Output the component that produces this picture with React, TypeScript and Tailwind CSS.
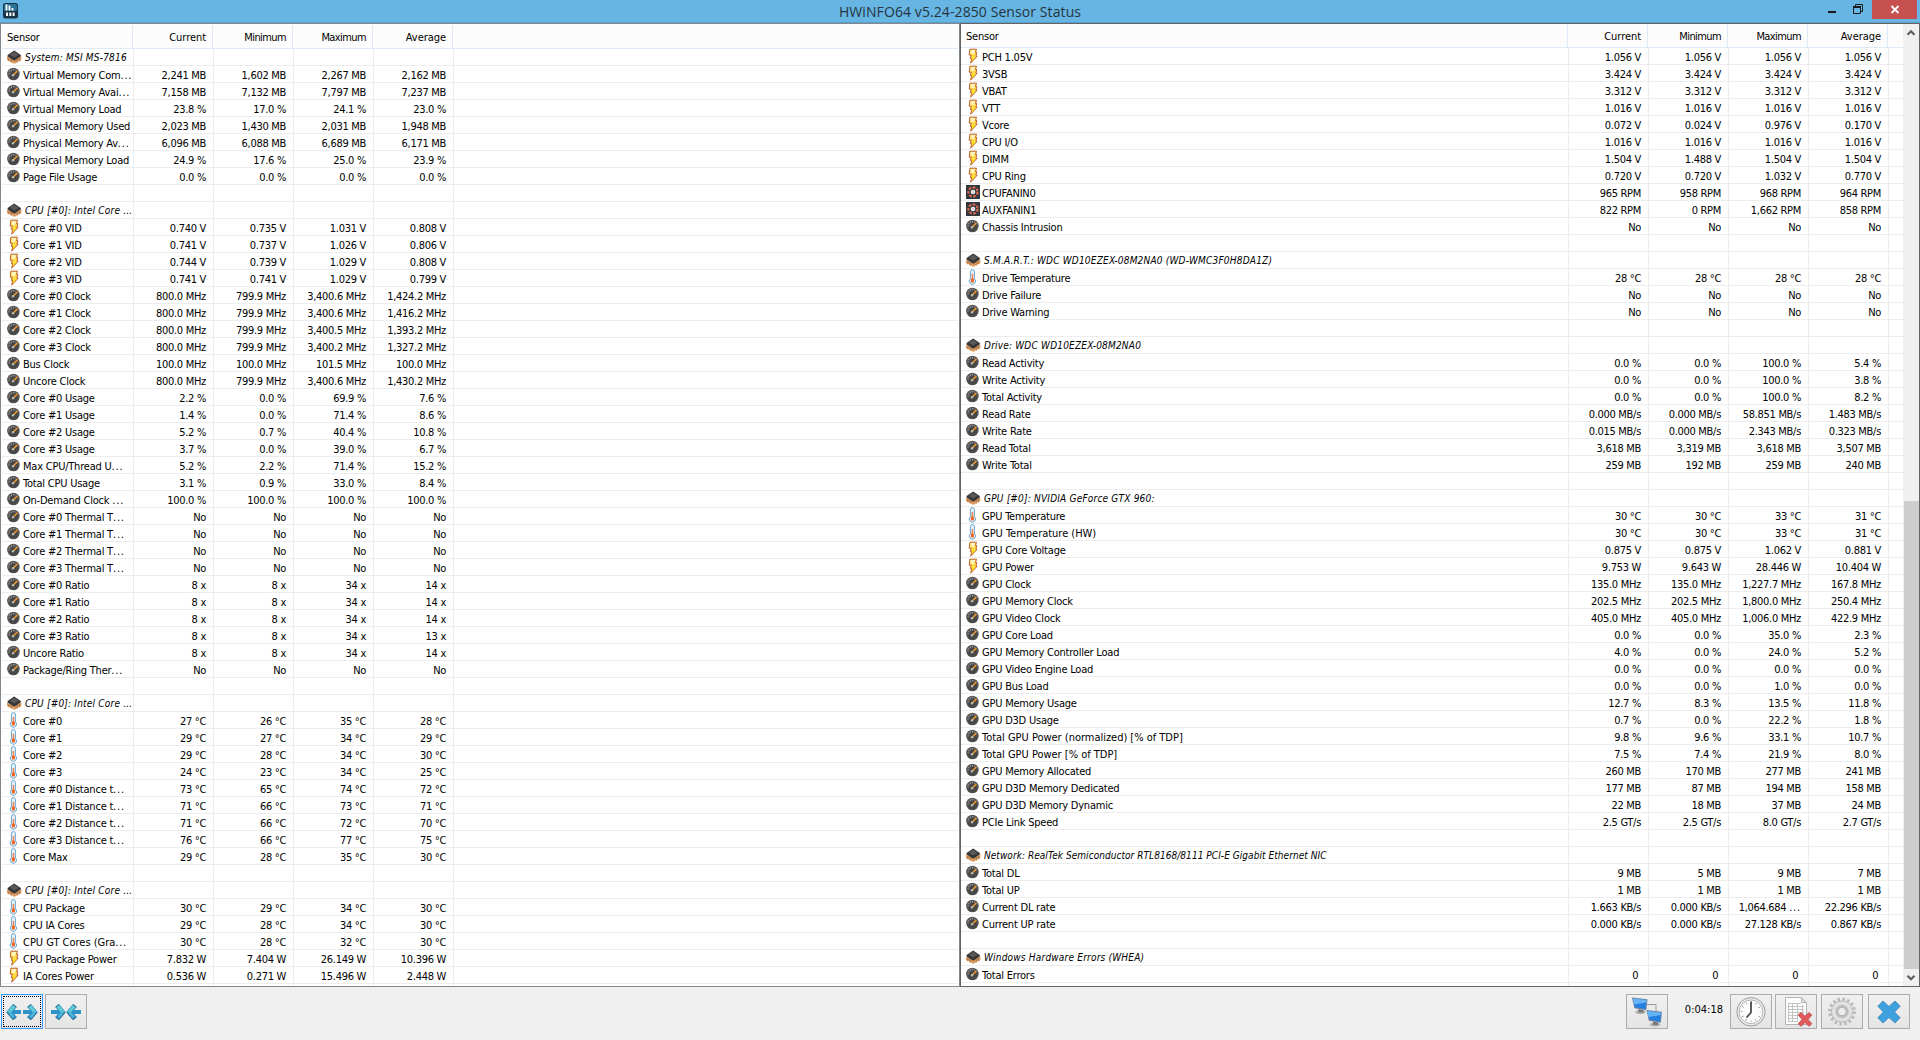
import { ReactNode } from 'react';
import clsx from 'clsx';

type Kind = 'chip' | 'gauge' | 'bolt' | 'temp' | 'fan';
type Row = [] | [Kind, string, string?, string?, string?, string?];

const columns = ['Current', 'Minimum', 'Maximum', 'Average'];

const leftRows: Row[] = [
    ['chip', 'System: MSI MS-7816'],
    ['gauge', 'Virtual Memory Com...', '2,241 MB', '1,602 MB', '2,267 MB', '2,162 MB'],
    ['gauge', 'Virtual Memory Avai...', '7,158 MB', '7,132 MB', '7,797 MB', '7,237 MB'],
    ['gauge', 'Virtual Memory Load', '23.8 %', '17.0 %', '24.1 %', '23.0 %'],
    ['gauge', 'Physical Memory Used', '2,023 MB', '1,430 MB', '2,031 MB', '1,948 MB'],
    ['gauge', 'Physical Memory Av...', '6,096 MB', '6,088 MB', '6,689 MB', '6,171 MB'],
    ['gauge', 'Physical Memory Load', '24.9 %', '17.6 %', '25.0 %', '23.9 %'],
    ['gauge', 'Page File Usage', '0.0 %', '0.0 %', '0.0 %', '0.0 %'],
    [],
    ['chip', 'CPU [#0]: Intel Core ...'],
    ['bolt', 'Core #0 VID', '0.740 V', '0.735 V', '1.031 V', '0.808 V'],
    ['bolt', 'Core #1 VID', '0.741 V', '0.737 V', '1.026 V', '0.806 V'],
    ['bolt', 'Core #2 VID', '0.744 V', '0.739 V', '1.029 V', '0.808 V'],
    ['bolt', 'Core #3 VID', '0.741 V', '0.741 V', '1.029 V', '0.799 V'],
    ['gauge', 'Core #0 Clock', '800.0 MHz', '799.9 MHz', '3,400.6 MHz', '1,424.2 MHz'],
    ['gauge', 'Core #1 Clock', '800.0 MHz', '799.9 MHz', '3,400.6 MHz', '1,416.2 MHz'],
    ['gauge', 'Core #2 Clock', '800.0 MHz', '799.9 MHz', '3,400.5 MHz', '1,393.2 MHz'],
    ['gauge', 'Core #3 Clock', '800.0 MHz', '799.9 MHz', '3,400.2 MHz', '1,327.2 MHz'],
    ['gauge', 'Bus Clock', '100.0 MHz', '100.0 MHz', '101.5 MHz', '100.0 MHz'],
    ['gauge', 'Uncore Clock', '800.0 MHz', '799.9 MHz', '3,400.6 MHz', '1,430.2 MHz'],
    ['gauge', 'Core #0 Usage', '2.2 %', '0.0 %', '69.9 %', '7.6 %'],
    ['gauge', 'Core #1 Usage', '1.4 %', '0.0 %', '71.4 %', '8.6 %'],
    ['gauge', 'Core #2 Usage', '5.2 %', '0.7 %', '40.4 %', '10.8 %'],
    ['gauge', 'Core #3 Usage', '3.7 %', '0.0 %', '39.0 %', '6.7 %'],
    ['gauge', 'Max CPU/Thread U...', '5.2 %', '2.2 %', '71.4 %', '15.2 %'],
    ['gauge', 'Total CPU Usage', '3.1 %', '0.9 %', '33.0 %', '8.4 %'],
    ['gauge', 'On-Demand Clock ...', '100.0 %', '100.0 %', '100.0 %', '100.0 %'],
    ['gauge', 'Core #0 Thermal T...', 'No', 'No', 'No', 'No'],
    ['gauge', 'Core #1 Thermal T...', 'No', 'No', 'No', 'No'],
    ['gauge', 'Core #2 Thermal T...', 'No', 'No', 'No', 'No'],
    ['gauge', 'Core #3 Thermal T...', 'No', 'No', 'No', 'No'],
    ['gauge', 'Core #0 Ratio', '8 x', '8 x', '34 x', '14 x'],
    ['gauge', 'Core #1 Ratio', '8 x', '8 x', '34 x', '14 x'],
    ['gauge', 'Core #2 Ratio', '8 x', '8 x', '34 x', '14 x'],
    ['gauge', 'Core #3 Ratio', '8 x', '8 x', '34 x', '13 x'],
    ['gauge', 'Uncore Ratio', '8 x', '8 x', '34 x', '14 x'],
    ['gauge', 'Package/Ring Ther...', 'No', 'No', 'No', 'No'],
    [],
    ['chip', 'CPU [#0]: Intel Core ...'],
    ['temp', 'Core #0', '27 °C', '26 °C', '35 °C', '28 °C'],
    ['temp', 'Core #1', '29 °C', '27 °C', '34 °C', '29 °C'],
    ['temp', 'Core #2', '29 °C', '28 °C', '34 °C', '30 °C'],
    ['temp', 'Core #3', '24 °C', '23 °C', '34 °C', '25 °C'],
    ['temp', 'Core #0 Distance t...', '73 °C', '65 °C', '74 °C', '72 °C'],
    ['temp', 'Core #1 Distance t...', '71 °C', '66 °C', '73 °C', '71 °C'],
    ['temp', 'Core #2 Distance t...', '71 °C', '66 °C', '72 °C', '70 °C'],
    ['temp', 'Core #3 Distance t...', '76 °C', '66 °C', '77 °C', '75 °C'],
    ['temp', 'Core Max', '29 °C', '28 °C', '35 °C', '30 °C'],
    [],
    ['chip', 'CPU [#0]: Intel Core ...'],
    ['temp', 'CPU Package', '30 °C', '29 °C', '34 °C', '30 °C'],
    ['temp', 'CPU IA Cores', '29 °C', '28 °C', '34 °C', '30 °C'],
    ['temp', 'CPU GT Cores (Gra...', '30 °C', '28 °C', '32 °C', '30 °C'],
    ['bolt', 'CPU Package Power', '7.832 W', '7.404 W', '26.149 W', '10.396 W'],
    ['bolt', 'IA Cores Power', '0.536 W', '0.271 W', '15.496 W', '2.448 W'],
];

const rightRows: Row[] = [
    ['bolt', 'PCH 1.05V', '1.056 V', '1.056 V', '1.056 V', '1.056 V'],
    ['bolt', '3VSB', '3.424 V', '3.424 V', '3.424 V', '3.424 V'],
    ['bolt', 'VBAT', '3.312 V', '3.312 V', '3.312 V', '3.312 V'],
    ['bolt', 'VTT', '1.016 V', '1.016 V', '1.016 V', '1.016 V'],
    ['bolt', 'Vcore', '0.072 V', '0.024 V', '0.976 V', '0.170 V'],
    ['bolt', 'CPU I/O', '1.016 V', '1.016 V', '1.016 V', '1.016 V'],
    ['bolt', 'DIMM', '1.504 V', '1.488 V', '1.504 V', '1.504 V'],
    ['bolt', 'CPU Ring', '0.720 V', '0.720 V', '1.032 V', '0.770 V'],
    ['fan', 'CPUFANIN0', '965 RPM', '958 RPM', '968 RPM', '964 RPM'],
    ['fan', 'AUXFANIN1', '822 RPM', '0 RPM', '1,662 RPM', '858 RPM'],
    ['gauge', 'Chassis Intrusion', 'No', 'No', 'No', 'No'],
    [],
    ['chip', 'S.M.A.R.T.: WDC WD10EZEX-08M2NA0 (WD-WMC3F0H8DA1Z)'],
    ['temp', 'Drive Temperature', '28 °C', '28 °C', '28 °C', '28 °C'],
    ['gauge', 'Drive Failure', 'No', 'No', 'No', 'No'],
    ['gauge', 'Drive Warning', 'No', 'No', 'No', 'No'],
    [],
    ['chip', 'Drive: WDC WD10EZEX-08M2NA0'],
    ['gauge', 'Read Activity', '0.0 %', '0.0 %', '100.0 %', '5.4 %'],
    ['gauge', 'Write Activity', '0.0 %', '0.0 %', '100.0 %', '3.8 %'],
    ['gauge', 'Total Activity', '0.0 %', '0.0 %', '100.0 %', '8.2 %'],
    ['gauge', 'Read Rate', '0.000 MB/s', '0.000 MB/s', '58.851 MB/s', '1.483 MB/s'],
    ['gauge', 'Write Rate', '0.015 MB/s', '0.000 MB/s', '2.343 MB/s', '0.323 MB/s'],
    ['gauge', 'Read Total', '3,618 MB', '3,319 MB', '3,618 MB', '3,507 MB'],
    ['gauge', 'Write Total', '259 MB', '192 MB', '259 MB', '240 MB'],
    [],
    ['chip', 'GPU [#0]: NVIDIA GeForce GTX 960:'],
    ['temp', 'GPU Temperature', '30 °C', '30 °C', '33 °C', '31 °C'],
    ['temp', 'GPU Temperature (HW)', '30 °C', '30 °C', '33 °C', '31 °C'],
    ['bolt', 'GPU Core Voltage', '0.875 V', '0.875 V', '1.062 V', '0.881 V'],
    ['bolt', 'GPU Power', '9.753 W', '9.643 W', '28.446 W', '10.404 W'],
    ['gauge', 'GPU Clock', '135.0 MHz', '135.0 MHz', '1,227.7 MHz', '167.8 MHz'],
    ['gauge', 'GPU Memory Clock', '202.5 MHz', '202.5 MHz', '1,800.0 MHz', '250.4 MHz'],
    ['gauge', 'GPU Video Clock', '405.0 MHz', '405.0 MHz', '1,006.0 MHz', '422.9 MHz'],
    ['gauge', 'GPU Core Load', '0.0 %', '0.0 %', '35.0 %', '2.3 %'],
    ['gauge', 'GPU Memory Controller Load', '4.0 %', '0.0 %', '24.0 %', '5.2 %'],
    ['gauge', 'GPU Video Engine Load', '0.0 %', '0.0 %', '0.0 %', '0.0 %'],
    ['gauge', 'GPU Bus Load', '0.0 %', '0.0 %', '1.0 %', '0.0 %'],
    ['gauge', 'GPU Memory Usage', '12.7 %', '8.3 %', '13.5 %', '11.8 %'],
    ['gauge', 'GPU D3D Usage', '0.7 %', '0.0 %', '22.2 %', '1.8 %'],
    ['gauge', 'Total GPU Power (normalized) [% of TDP]', '9.8 %', '9.6 %', '33.1 %', '10.7 %'],
    ['gauge', 'Total GPU Power [% of TDP]', '7.5 %', '7.4 %', '21.9 %', '8.0 %'],
    ['gauge', 'GPU Memory Allocated', '260 MB', '170 MB', '277 MB', '241 MB'],
    ['gauge', 'GPU D3D Memory Dedicated', '177 MB', '87 MB', '194 MB', '158 MB'],
    ['gauge', 'GPU D3D Memory Dynamic', '22 MB', '18 MB', '37 MB', '24 MB'],
    ['gauge', 'PCIe Link Speed', '2.5 GT/s', '2.5 GT/s', '8.0 GT/s', '2.7 GT/s'],
    [],
    ['chip', 'Network: RealTek Semiconductor RTL8168/8111 PCI-E Gigabit Ethernet NIC'],
    ['gauge', 'Total DL', '9 MB', '5 MB', '9 MB', '7 MB'],
    ['gauge', 'Total UP', '1 MB', '1 MB', '1 MB', '1 MB'],
    ['gauge', 'Current DL rate', '1.663 KB/s', '0.000 KB/s', '1,064.684 ...', '22.296 KB/s'],
    ['gauge', 'Current UP rate', '0.000 KB/s', '0.000 KB/s', '27.128 KB/s', '0.867 KB/s'],
    [],
    ['chip', 'Windows Hardware Errors (WHEA)'],
    ['gauge', 'Total Errors', '0 ', '0 ', '0 ', '0 '],
];

const RowIcon = ({ kind }: { kind: Kind }) => (
    <svg className="block h-4 w-4 shrink-0" viewBox="0 0 16 16">
        {kind === 'gauge' && (
            <>
                <circle cx="6.4" cy="8" r="6.3" fill="#585858" />
                <circle cx="6.4" cy="8.8" r="4.8" fill="#474747" />
                <path
                    d="M2.3 8.4A4.1 4.1 0 0 1 8.5 4.4"
                    fill="none"
                    stroke="#b5b5b5"
                    strokeWidth="1.1"
                    strokeDasharray="1 1.2"
                />
                <path d="M6.3 9 10.4 4.9" stroke="#e8952f" strokeWidth="1.5" />
                <circle cx="6" cy="9.2" r="1.2" fill="#b9b9b9" />
            </>
        )}
        {kind === 'bolt' && (
            <>
                <path
                    d="M3.9 1.2h6.6L9.5 4.6h1.3L9.9 8.2h1.3L4.7 15.2 5.7 10.4H4.3l1-3.2H3.2z"
                    fill="#ffdc48"
                    stroke="#bd6136"
                    strokeWidth="1"
                />
                <path d="M4.8 2h4.4L8 6H4.6z" fill="#fff3bd" />
                <path d="M6.3 9.2h2.4l-2.8 3.8z" fill="#ffe800" />
            </>
        )}
        {kind === 'temp' && (
            <>
                <path
                    d="M4.4 2.6a2 2 0 0 1 4 0v7.2a3.1 3.1 0 1 1-4 0z"
                    fill="#e4f2fb"
                    stroke="#6ba3c9"
                    strokeWidth="1"
                />
                <path d="M6.4 5v6" stroke="#f08350" strokeWidth="1.5" />
                <rect x="4.9" y="9.5" width="3" height="4" rx="1" fill="#f0631e" />
            </>
        )}
        {kind === 'fan' && (
            <>
                <rect x="0" y="1" width="14" height="14" fill="#33373d" />
                <circle
                    cx="7"
                    cy="8"
                    r="4.6"
                    fill="none"
                    stroke="#d4684f"
                    strokeWidth="2.2"
                    strokeDasharray="2.8 1.33"
                />
                <circle cx="7" cy="8" r="2.3" fill="#eee" />
                <circle cx="7" cy="8" r="0.8" fill="#c9a39d" />
            </>
        )}
        {kind === 'chip' && (
            <>
                <path
                    d="M0 7.4 7.2 11l7.2-3.6v3.4l-1.6 1.6-1.2-.4-1 1.8-1.4-.4-.6 1.2H5.8l-.6-1.2-1.4.4-1-1.8-1.2.4L0 10.8z"
                    fill="#dc9a5e"
                />
                <path
                    d="M2 9v2.6M4.2 10v2.8M10.2 10v2.8M12.4 9v2.6"
                    stroke="#8a5c38"
                    strokeWidth="0.7"
                />
                <path d="M.6 5.9 7.2 1.4l6.6 4.5v1.5l-6.6 4.4L.6 7.4z" fill="#363636" />
                <path d="M2.8 5.8 7.2 2.8l4.4 3-4.4 2.7z" fill="#595959" />
            </>
        )}
    </svg>
);

// Truncated strings end in dots that are set wider than the text
const Text = ({ value }: { value: string }) =>
    value.endsWith('...') ? (
        <>
            {value.slice(0, -3)}
            <span className="tracking-[0.8px]">...</span>
        </>
    ) : (
        <>{value}</>
    );

const SensorPane = ({
    rows,
    sensorHead,
    sensorCell,
    className,
}: {
    rows: Row[];
    sensorHead: string;
    sensorCell: string;
    className: string;
}) => (
    <div className={clsx('flex min-w-0 flex-col overflow-hidden bg-white', className)}>
        <div className="flex h-6 shrink-0 border-b border-[#dfeaf7] bg-[#fcfcfc] leading-[25px]">
            <div
                className={clsx(
                    'h-[23px] shrink-0 border-r border-[#dfeaf7] pl-[5px] tracking-[-0.2px]',
                    sensorHead,
                )}
            >
                Sensor
            </div>
            {columns.map((x) => (
                <div
                    className={clsx(
                        'h-[23px] w-20 shrink-0 border-r border-[#dfeaf7] pr-[6px] text-right',
                        x.endsWith('imum') ? 'tracking-[-0.6px]' : 'tracking-[-0.05px]',
                    )}
                    key={x}
                >
                    {x}
                </div>
            ))}
        </div>
        {rows.map(([kind, name, ...values], i) => (
            <div
                className="flex h-[17px] shrink-0 border-b border-[#ededed] leading-[19px]"
                key={i}
            >
                <div
                    className={clsx(
                        'flex h-4 shrink-0 border-r border-[#ededed] pl-[5px] whitespace-nowrap',
                        sensorCell,
                    )}
                >
                    {kind && <RowIcon kind={kind} />}
                    {kind === 'chip' ? (
                        <span
                            className={clsx(
                                'pl-0.5 text-[10px] leading-[18px] italic',
                                name?.startsWith('Network')
                                    ? 'tracking-[0.05px]'
                                    : 'tracking-[0.2px]',
                            )}
                        >
                            {name}
                        </span>
                    ) : (
                        <span
                            className={
                                name?.match(/[[(]/) ? 'tracking-[-0.02px]' : 'tracking-[-0.22px]'
                            }
                        >
                            <Text value={name ?? ''} />
                        </span>
                    )}
                </div>
                {columns.map((x, j) => (
                    <div
                        className="h-4 w-20 shrink-0 border-r border-[#ededed] pr-[7px] text-right whitespace-pre"
                        key={x}
                    >
                        <Text value={values[j] ?? ''} />
                    </div>
                ))}
            </div>
        ))}
        <div className="flex flex-1">
            <div className={clsx('shrink-0 border-r border-[#ededed]', sensorCell)} />
            {columns.map((x) => (
                <div className="w-20 shrink-0 border-r border-[#ededed]" key={x} />
            ))}
        </div>
    </div>
);

const ScrollBar = () => (
    <div className="flex w-4 shrink-0 flex-col items-center bg-[#f0f0f0]">
        <svg className="h-[17px] w-4 shrink-0" viewBox="0 0 16 17">
            <path d="M4.5 10.7 8 7.2l3.5 3.5" fill="none" stroke="#606060" strokeWidth="2.2" />
        </svg>
        <div className="mt-[460px] h-[468px] w-[15px] shrink-0 bg-[#cdcdcd]" />
        <svg className="h-[17px] w-4 shrink-0" viewBox="0 0 16 17">
            <path d="M4.5 6.7 8 10.2l3.5-3.5" fill="none" stroke="#606060" strokeWidth="2.2" />
        </svg>
    </div>
);

const ToolButton = ({
    children,
    focused,
    className,
}: {
    children: ReactNode;
    focused?: boolean;
    className?: string;
}) => (
    <button
        className={clsx(
            'flex h-[35px] w-[42px] items-center justify-center border bg-linear-to-b from-[#f0f0f0] to-[#e5e5e5] p-px',
            focused ? 'border-[#3399ff]' : 'border-[#acacac]',
            className,
        )}
    >
        <span
            className={clsx(
                'flex h-full w-full items-center justify-center',
                focused && 'border border-dotted border-black',
            )}
        >
            {children}
        </span>
    </button>
);

const Arrow = ({ flip }: { flip?: boolean }) => (
    <svg className={clsx('h-4 w-[15px] shrink-0', flip && '-scale-x-100')} viewBox="0 0 15 16">
        <path d="M0 6h6.8L4.2 3 8 0l6.6 8L8 16l-3.8-3 2.6-3H0z" fill="#2f93c9" />
        <path d="M5.4 2.9 7.9 1l5.6 6.8-3.8.2z" fill="#63cbd6" />
        <path d="m7 12.4 3-4.4 3 .4-4.6 5.8z" fill="#4fb9d8" />
        <path d="m4.6 3.1 3.4-2.6M14.2 8.4 8 15.6l-3.4-2.4" fill="none" stroke="#25648d" />
    </svg>
);

const Monitor = ({ x, y }: { x: number; y: number }) => (
    <g transform={`translate(${x} ${y})`}>
        <ellipse cx="9" cy="15" rx="5.2" ry="2" fill="#b3b3b3" />
        <path d="m7 12 5 1v2.4H7z" fill="#777" />
        <path d="M.4.4 16 2.2l-1.2 11L2.8 11.2z" fill="#70869c" />
        <path d="M1.4 1.4 15 3l-1 9.2L3.6 10.3z" fill="#2480e0" />
        <path d="M1.4 1.4 15 3l-.3 2.4L2.4 7.4z" fill="#66b4f5" />
    </g>
);

const App = () => {
    return (
        <div className="flex h-[1040px] w-[1920px] flex-col overflow-hidden bg-[#f0f0f0] font-['DejaVu_Sans_Condensed','DejaVu_Sans',sans-serif] text-[11px] tracking-[-0.3px] text-black">
            <div className="flex h-[23px] shrink-0 border-b border-[#5a9fca] bg-[#67b5e3]">
                <svg className="mt-[3px] ml-[3px] h-4 w-[15px]" viewBox="0 0 15 16">
                    <rect width="15" height="15.5" rx="2.5" fill="#173447" />
                    <rect x="1" y="1" width="13" height="7" rx="1.5" fill="#2b7299" />
                    <path d="M3.5 1.5v6M6.5 2.5v5M9.5 5v2.5" stroke="#fff" strokeWidth="1.8" />
                    <path d="M4 9.5V13M7.3 9.5V13M10.6 9.5V13" stroke="#fff" strokeWidth="2" />
                </svg>
                <div className="flex-1 pl-[74px] text-center font-['Open_Sans',sans-serif] text-[14px] leading-[24px] tracking-[0.09px] text-[#26343d]">
                    HWiNFO64 v5.24-2850 Sensor Status
                </div>
                <svg className="h-[18px] w-[44px]" viewBox="0 0 44 18">
                    <rect x="0" y="11" width="8" height="2" fill="#1c1c1c" />
                    <path d="M25.5 6.5h7v7h-7zM27.5 6V4.5h7v7H33" fill="none" stroke="#1c1c1c" />
                    <path d="M25 7h8" stroke="#1c1c1c" strokeWidth="2" />
                </svg>
                <div className="mr-[3px] flex h-[19px] w-[45px] justify-center bg-[#c75050]">
                    <svg className="h-[19px] w-3" viewBox="0 0 12 19">
                        <path d="m2.5 6 7 7m0-7-7 7" stroke="#fff" strokeWidth="1.8" />
                    </svg>
                </div>
            </div>
            <div className="flex h-[964px] shrink-0">
                <SensorPane
                    className="w-[960px] border border-[#828790] px-px pt-px"
                    rows={leftRows}
                    sensorCell="w-[132px]"
                    sensorHead="w-[131px]"
                />
                <div className="flex w-[960px] border border-[#646464]">
                    <SensorPane
                        className="w-[942px]"
                        rows={rightRows}
                        sensorCell="w-[608px]"
                        sensorHead="w-[607px]"
                    />
                    <ScrollBar />
                </div>
            </div>
            <div className="flex items-center pt-[7px] pl-px">
                <ToolButton focused>
                    <div className="flex gap-0.5">
                        <Arrow flip />
                        <Arrow />
                    </div>
                </ToolButton>
                <ToolButton className="ml-0.5">
                    <div className="flex">
                        <Arrow />
                        <Arrow flip />
                    </div>
                </ToolButton>
                <ToolButton className="ml-[1539px]">
                    <svg className="h-[31px] w-8" viewBox="0 0 32 31">
                        <path d="M16 8.5h9v8" fill="none" stroke="#9b9b9b" />
                        <Monitor x={0.5} y={1} />
                        <Monitor x={15} y={13.5} />
                    </svg>
                </ToolButton>
                <div className="w-[62px] pr-[7px] pb-0.5 text-right tracking-[0px]">0:04:18</div>
                <ToolButton>
                    <svg className="h-[31px] w-8" viewBox="0 0 32 31">
                        <circle cx="16" cy="15.8" r="14.2" fill="#e9e9e9" stroke="#a0a0a0" />
                        <circle cx="16" cy="15.8" r="11.8" fill="#fdfdfd" stroke="#b5b5b5" />
                        <circle
                            cx="16"
                            cy="15.8"
                            r="9.4"
                            fill="none"
                            stroke="#8e8e8e"
                            strokeWidth="2"
                            strokeDasharray="0.7 4.22"
                            strokeDashoffset="0.35"
                        />
                        <path d="M16 5.5v11l-4.5 5" fill="none" stroke="#4a4a4a" strokeWidth="1.8" />
                    </svg>
                </ToolButton>
                <ToolButton className="ml-[3px]">
                    <svg className="h-[31px] w-8" viewBox="0 0 32 31">
                        <path d="M5.5 1.5h16l5 5v22h-21z" fill="#fcfcfc" stroke="#b4b4b4" />
                        <path d="M21.5 1.5v5h5z" fill="#dedede" stroke="#b4b4b4" />
                        <path
                            d="M8 7.5h13M8 10.5h16M8 13.5h16M8 16.5h16M8 19.5h12M8 22.5h10M8 25.5h10M8.5 7v19M12.5 7v19M17.5 7v19M22.5 9v10"
                            stroke="#b8b8b8"
                            strokeWidth="0.8"
                        />
                        <path
                            d="m18.2 19 2.8-2.4 4 3.6 4-3.6 2.8 2.4-3.8 4.4 3.8 4.4-2.8 2.4-4-3.7-4 3.7-2.8-2.4 3.8-4.4z"
                            fill="#e15a5a"
                            stroke="#c04448"
                            strokeWidth="0.8"
                        />
                    </svg>
                </ToolButton>
                <ToolButton className="ml-1">
                    <svg className="h-[31px] w-8" viewBox="0 0 32 31">
                        <circle
                            cx="16"
                            cy="15.5"
                            r="12.4"
                            fill="none"
                            stroke="#b9b9b9"
                            strokeWidth="3"
                            strokeDasharray="2.5 2.37"
                        />
                        <circle cx="16" cy="15.5" r="10.6" fill="#e2e2e2" stroke="#b9b9b9" />
                        <circle
                            cx="16"
                            cy="15.5"
                            r="5.6"
                            fill="#ededed"
                            stroke="#c0c0c0"
                            strokeWidth="2.4"
                        />
                        <circle cx="16" cy="15.5" r="4.2" fill="#ededed" stroke="#a9a9a9" />
                    </svg>
                </ToolButton>
                <ToolButton className="ml-[5px]">
                    <svg className="h-[31px] w-8" viewBox="0 0 32 31">
                        <path
                            d="M4.8 10.2 10 5l6 5.4L22 5l5.2 5.2-5.6 5.8 5.6 5.8L22 27l-6-5.4-6 5.4-5.2-5.2 5.6-5.8z"
                            fill="#3ea0dc"
                            stroke="#2c7db4"
                            strokeWidth="0.7"
                        />
                    </svg>
                </ToolButton>
            </div>
        </div>
    );
};

export default App;
